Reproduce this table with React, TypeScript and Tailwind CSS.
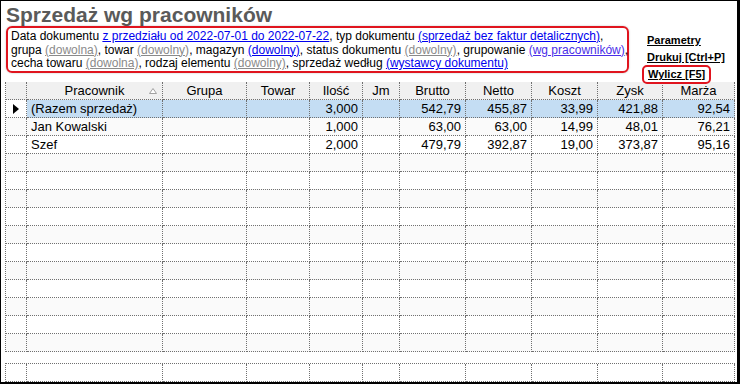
import React from "react";

type Row = {
  name: string;
  ilosc: string;
  brutto: string;
  netto: string;
  koszt: string;
  zysk: string;
  marza: string;
};

const rows: Row[] = [
  { name: "(Razem sprzedaż)", ilosc: "3,000", brutto: "542,79", netto: "455,87", koszt: "33,99", zysk: "421,88", marza: "92,54" },
  { name: "Jan Kowalski", ilosc: "1,000", brutto: "63,00", netto: "63,00", koszt: "14,99", zysk: "48,01", marza: "76,21" },
  { name: "Szef", ilosc: "2,000", brutto: "479,79", netto: "392,87", koszt: "19,00", zysk: "373,87", marza: "95,16" },
];

const EMPTY_ROWS = 11;

const cols = "grid grid-cols-[21px_136px_84px_63px_53px_37px_66px_66px_66px_65px_72px]";
const cell = "h-[18px] border-r border-b border-dotted border-[#707070] px-[4px] leading-[17px] truncate";

const BlueLink = ({ children }: { children: React.ReactNode }) => (
  <span className="text-[#0000ee] underline">{children}</span>
);
const GrayLink = ({ children }: { children: React.ReactNode }) => (
  <span className="text-[#8a8a8a] underline">{children}</span>
);

const SortArrow = () => (
  <svg width="8" height="6" viewBox="0 0 8 6" className="absolute right-[5px] top-[6px]">
    <path d="M4 0.5 L7.5 5.5 L0.5 5.5 Z" fill="#fff" stroke="#a0a0a0" strokeWidth="1" />
  </svg>
);

const App: React.FC = () => {
  const headers = ["Grupa", "Towar", "Ilość", "Jm", "Brutto", "Netto", "Koszt", "Zysk", "Marża"];

  return (
    <div className="w-[740px] h-[384px] bg-white border-black border-t border-l border-r-[3px] border-b-2 flex flex-col overflow-hidden font-['Liberation_Sans',Arial,sans-serif] text-black">
      <div className="relative z-10 h-[80px] flex flex-col">
        <h1 className="pl-[5px] pt-[2px] h-[25px] text-[21px] leading-[24px] font-bold text-[#5a5a5a]">
          Sprzedaż wg pracowników
        </h1>
        <div className="flex">
          <div className="ml-[5px] w-[623px] h-[47px] border-2 border-[#e0141e] rounded-[6px] shadow-[0_0_2px_rgba(0,0,0,0.25)] px-[3px] pt-[2px] text-[12px] leading-[13.5px] whitespace-nowrap">
            <div>
              Data dokumentu <BlueLink>z przedziału od 2022-07-01 do 2022-07-22</BlueLink>, typ dokumentu{" "}
              <BlueLink>(sprzedaż bez faktur detalicznych)</BlueLink>,
            </div>
            <div>
              grupa <GrayLink>(dowolna)</GrayLink>, towar <GrayLink>(dowolny)</GrayLink>, magazyn{" "}
              <BlueLink>(dowolny)</BlueLink>, status dokumentu <GrayLink>(dowolny)</GrayLink>, grupowanie{" "}
              <span className="text-[#4a2ee8] underline">(wg pracowników)</span>,
            </div>
            <div>
              cecha towaru <GrayLink>(dowolna)</GrayLink>, rodzaj elementu <GrayLink>(dowolny)</GrayLink>, sprzedaż według{" "}
              <BlueLink>(wystawcy dokumentu)</BlueLink>
            </div>
          </div>
          <div className="ml-[13px] pt-[8px] flex flex-col items-start text-[11px] font-bold leading-[13px]">
            <span className="ml-[5px] underline">Parametry</span>
            <span className="ml-[5px] mt-[4px] underline">Drukuj [Ctrl+P]</span>
            <span className="mt-[1px] px-[4px] pt-[1px] h-[19px] border-2 border-[#e0141e] rounded-[5px] underline">
              Wylicz [F5]
            </span>
          </div>
        </div>
      </div>

      <div className="ml-[4px] mt-[1px] w-[730px] border-l border-dotted border-[#707070] text-[13px]">
        <div className={`${cols} bg-[#f0f0f0]`}>
          <div className={cell}></div>
          <div className={`${cell} relative text-center`}>
            Pracownik
            <SortArrow />
          </div>
          {headers.map((h) => (
            <div key={h} className={`${cell} text-center`}>
              {h}
            </div>
          ))}
        </div>

        {rows.map((r, i) => {
          const bg = i === 0 ? "bg-[#c4ddf3]" : i % 2 === 1 ? "bg-[#fafafa]" : "bg-white";
          return (
            <div key={r.name} className={cols}>
              <div className={`${cell} flex items-center justify-center ${i % 2 === 1 ? "bg-[#fafafa]" : "bg-white"}`}>
                {i === 0 && (
                  <svg width="6" height="10" viewBox="0 0 6 10">
                    <path d="M0 0 L6 5 L0 10 Z" fill="#000" />
                  </svg>
                )}
              </div>
              <div className={`${cell} ${bg}`}>{r.name}</div>
              <div className={`${cell} ${bg}`}></div>
              <div className={`${cell} ${bg}`}></div>
              <div className={`${cell} ${bg} text-right`}>{r.ilosc}</div>
              <div className={`${cell} ${bg}`}></div>
              <div className={`${cell} ${bg} text-right`}>{r.brutto}</div>
              <div className={`${cell} ${bg} text-right`}>{r.netto}</div>
              <div className={`${cell} ${bg} text-right`}>{r.koszt}</div>
              <div className={`${cell} ${bg} text-right`}>{r.zysk}</div>
              <div className={`${cell} ${bg} text-right`}>{r.marza}</div>
            </div>
          );
        })}

        {Array.from({ length: EMPTY_ROWS }).map((_, k) => {
          const i = k + rows.length;
          const bg = i % 2 === 1 ? "bg-[#fafafa]" : "bg-white";
          return (
            <div key={i} className={`${cols} ${bg}`}>
              {Array.from({ length: 11 }).map((__, c) => (
                <div key={c} className={cell}></div>
              ))}
            </div>
          );
        })}
      </div>

      <div className="ml-[4px] mt-[11px] w-[730px] border-l border-t border-dotted border-[#707070]">
        <div className={cols}>
          {Array.from({ length: 11 }).map((_, c) => (
            <div key={c} className={`${cell} h-[17px]`}></div>
          ))}
        </div>
      </div>
    </div>
  );
};

export default App;
